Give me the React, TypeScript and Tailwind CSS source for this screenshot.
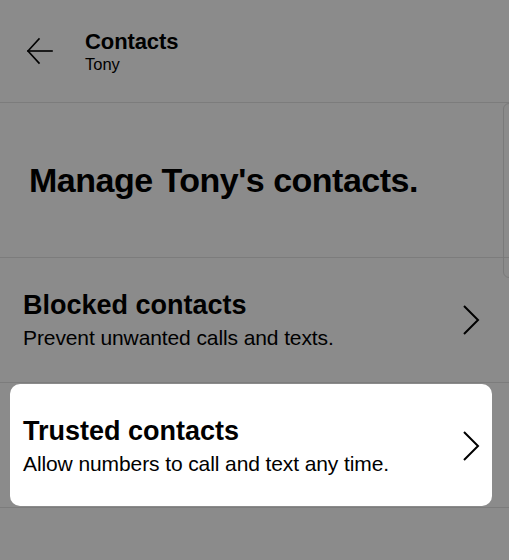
import React from 'react'

function BackArrow() {
  return (
    <svg width="28" height="28" viewBox="0 0 28 28" fill="none" stroke="#000" strokeWidth="1.6" strokeLinecap="square">
      <path d="M2 14 H26" />
      <path d="M13 2 L2 14 L13 26" strokeLinejoin="miter" />
    </svg>
  )
}

function Chevron() {
  return (
    <svg width="20" height="32" viewBox="0 0 20 32" fill="none" stroke="#000" strokeWidth="2">
      <path d="M3 2 L17 16 L3 30" />
    </svg>
  )
}

interface RowProps {
  title: string
  subtitle: string
}

function OptionRow({ title, subtitle }: RowProps) {
  return (
    <div className="flex items-center justify-between">
      <div className="flex flex-col">
        <span className="text-[27px] font-bold leading-[32px]">{title}</span>
        <span className="text-[21px] leading-[26px] tracking-[-0.1px] mt-[4px]">{subtitle}</span>
      </div>
      <Chevron />
    </div>
  )
}

export default function App() {
  return (
    <div
      className="relative w-[509px] h-[560px] bg-[#8b8b8b] text-black overflow-hidden"
      style={{ fontFamily: '"Liberation Sans", Arial, sans-serif' }}
    >
      {/* Header */}
      <div className="h-[103px] border-b border-[#7c7c7c] flex items-start pt-[29px]">
        <div className="pl-[26px] pt-[8px] w-[85px]">
          <BackArrow />
        </div>
        <div className="flex flex-col">
          <span className="text-[22px] font-bold leading-[25px] tracking-[-0.1px]">Contacts</span>
          <span className="text-[16.5px] leading-[20px]">Tony</span>
        </div>
      </div>

      {/* Title */}
      <div className="h-[155px] border-b border-[#7c7c7c] flex items-center pl-[29px]">
        <h1 className="text-[34px] font-bold leading-[40px] tracking-[-0.5px]">Manage Tony's contacts.</h1>
      </div>

      {/* Blocked */}
      <div className="h-[125px] border-b border-[#7c7c7c] flex flex-col justify-center pl-[23px] pr-[28px]">
        <OptionRow title="Blocked contacts" subtitle="Prevent unwanted calls and texts." />
      </div>

      {/* Trusted (highlighted) */}
      <div className="h-[125px] border-b border-[#7c7c7c] pl-[10px] pr-[17px] pt-[1px] pb-[1px]">
        <div className="h-full bg-white rounded-[10px] flex flex-col justify-center pl-[13px] pr-[11px] pt-[2px]">
          <OptionRow title="Trusted contacts" subtitle="Allow numbers to call and text any time." />
        </div>
      </div>

      {/* Scroll indicator */}
      <div className="absolute left-[503px] top-[103px] w-[12px] h-[175px] border border-[#7a7a7a] rounded-[6px]" />
    </div>
  )
}
